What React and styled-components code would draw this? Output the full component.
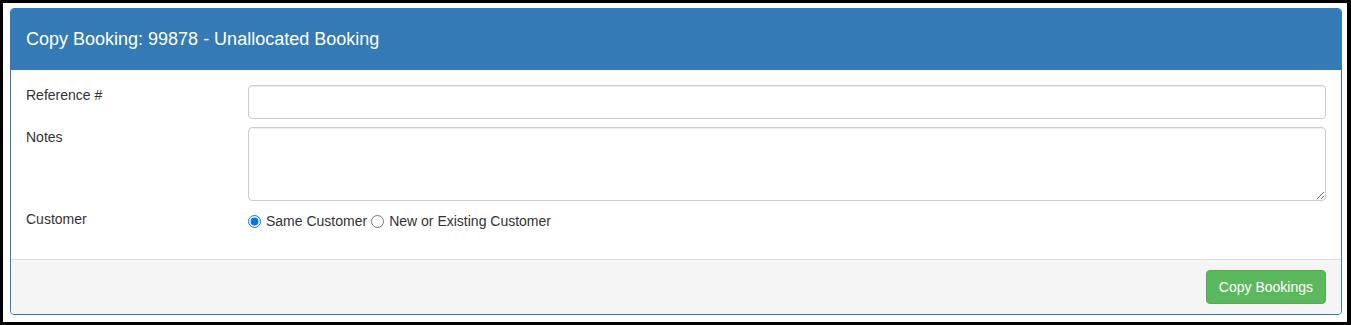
import React from "react";
import styled, { createGlobalStyle } from "styled-components";

const GlobalStyle = createGlobalStyle`
  html, body {
    margin: 0;
    padding: 0;
    background: #fff;
  }
  body {
    font-family: "Liberation Sans", Arial, sans-serif;
    font-size: 14px;
    color: #333;
  }
  * {
    box-sizing: border-box;
  }
`;

const Frame = styled.div`
  width: 1351px;
  height: 325px;
  border: 3px solid #000;
  border-right-width: 4px;
  background: #fff;
  padding: 5px 5px 7px 7px;
`;

const Panel = styled.div`
  border: 1px solid #337ab7;
  border-radius: 4px;
  background: #fff;
  overflow: hidden;
`;

const Heading = styled.div`
  background: #337ab7;
  color: #fff;
  padding: 20px 15px;
  border-bottom: 1px solid #337ab7;
`;

const Title = styled.h3`
  margin: 0;
  font-size: 18px;
  font-weight: normal;
  line-height: 20px;
`;

const Body = styled.div`
  padding: 15px 15px 28px;
  display: flex;
  flex-direction: column;
  gap: 8px;
`;

const Row = styled.div`
  display: grid;
  grid-template-columns: 222px 1fr;
  align-items: start;
`;

const Label = styled.label`
  line-height: 20px;
`;

const Input = styled.input`
  display: block;
  width: 100%;
  height: 34px;
  padding: 6px 12px;
  font: inherit;
  border: 1px solid #ccc;
  border-radius: 4px;
  box-shadow: inset 0 1px 1px rgba(0, 0, 0, 0.075);
`;

const TextArea = styled.textarea`
  display: block;
  width: 100%;
  height: 74px;
  padding: 6px 12px;
  font: inherit;
  border: 1px solid #ccc;
  border-radius: 4px;
  box-shadow: inset 0 1px 1px rgba(0, 0, 0, 0.075);
  resize: vertical;
`;

const Radios = styled.div`
  display: flex;
  align-items: center;
  line-height: 20px;
  padding-top: 2px;
`;

const RadioLabel = styled.label`
  display: inline-flex;
  align-items: center;
  gap: 5px;
  margin-right: 4px;

  input {
    margin: 0;
    width: 13px;
    height: 13px;
  }
`;

const Footer = styled.div`
  background: #f5f5f5;
  border-top: 1px solid #ddd;
  padding: 10px 15px;
  display: flex;
  justify-content: flex-end;
`;

const Button = styled.button`
  height: 34px;
  padding: 6px 12px;
  font: inherit;
  color: #fff;
  background: #5cb85c;
  border: 1px solid #4cae4c;
  border-radius: 4px;
  cursor: pointer;
`;

export default function App() {
  return (
    <>
      <GlobalStyle />
      <Frame>
        <Panel>
          <Heading>
            <Title>Copy Booking: 99878 - Unallocated Booking</Title>
          </Heading>
          <Body>
            <Row>
              <Label>Reference #</Label>
              <Input type="text" />
            </Row>
            <Row>
              <Label>Notes</Label>
              <TextArea />
            </Row>
            <Row>
              <Label>Customer</Label>
              <Radios>
                <RadioLabel>
                  <input type="radio" name="customer" defaultChecked />
                  Same Customer
                </RadioLabel>
                <RadioLabel>
                  <input type="radio" name="customer" />
                  New or Existing Customer
                </RadioLabel>
              </Radios>
            </Row>
          </Body>
          <Footer>
            <Button>Copy Bookings</Button>
          </Footer>
        </Panel>
      </Frame>
    </>
  );
}
